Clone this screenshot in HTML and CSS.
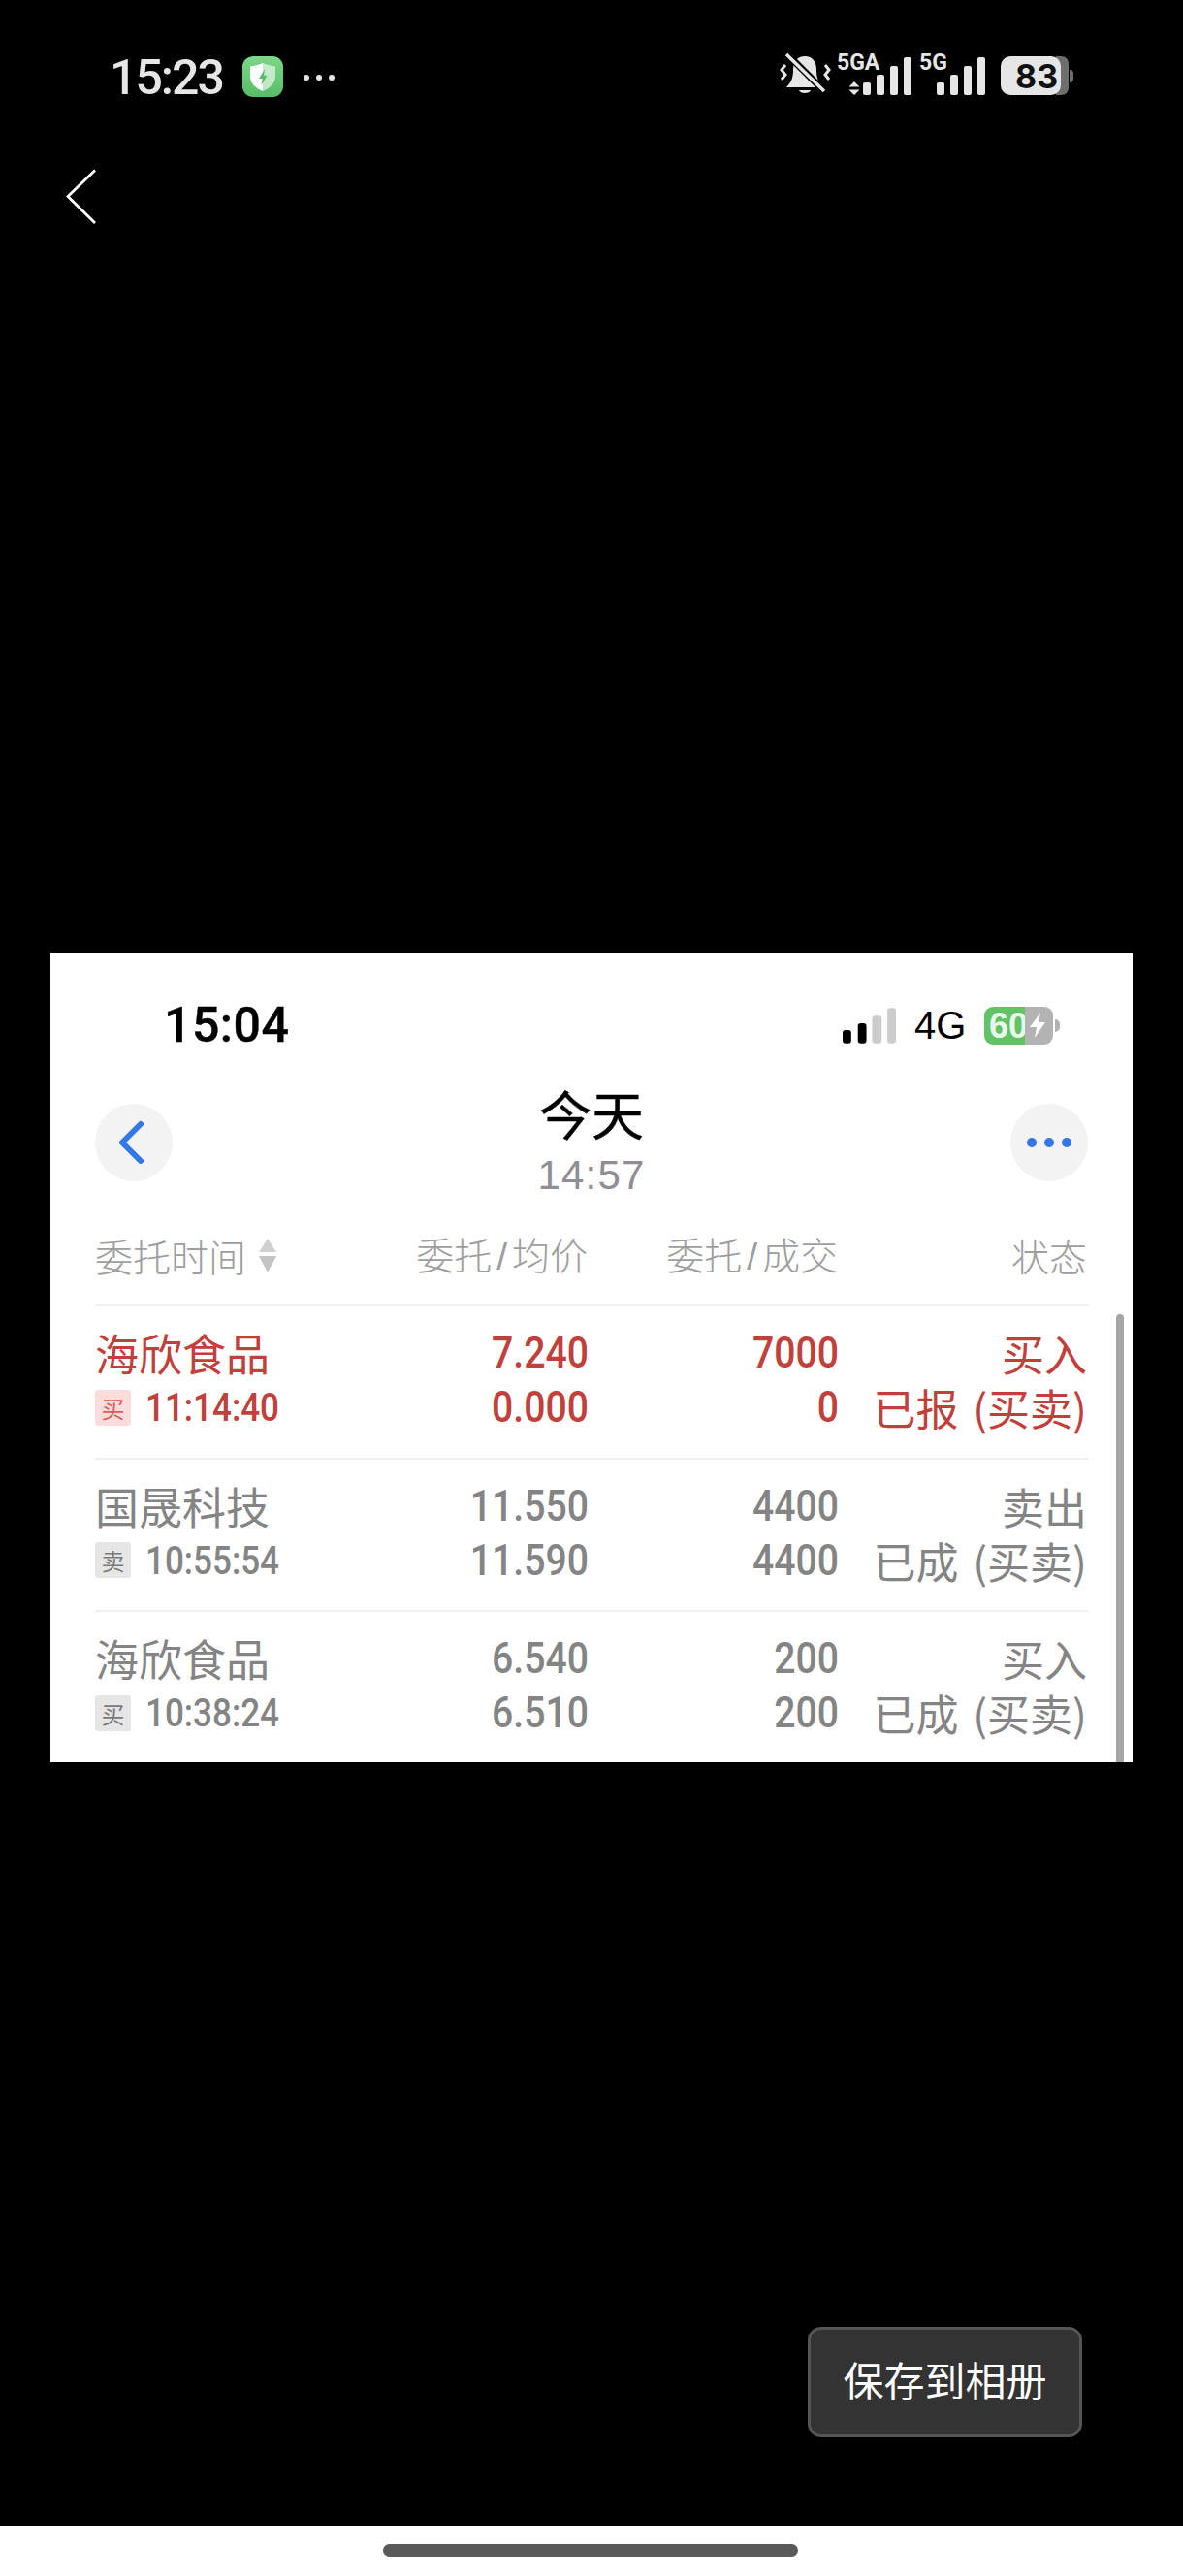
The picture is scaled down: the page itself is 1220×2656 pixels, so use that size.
FILE: index.html
```html
<!DOCTYPE html>
<html lang="zh-CN">
<head>
<meta charset="utf-8">
<title>保存到相册</title>
<link rel="stylesheet" href="styles.css">
</head>
<body>
<div class="screen">
  <header class="os-bar">
    <div class="os-left">
      <span class="os-time">15:23</span>
      <svg class="shield" viewBox="0 0 42 42" width="42" height="42">
        <defs><linearGradient id="sg" x1="0" y1="0" x2="0" y2="1"><stop offset="0" stop-color="#7bd88a"/><stop offset="1" stop-color="#58bd67"/></linearGradient></defs>
        <rect width="42" height="42" rx="11" fill="url(#sg)"/>
        <path d="M21 7 C17 9 12 10 8 10.500 V21 C8 28 14 33 21 36 Z" fill="#fff"/>
        <path d="M21 7 C25 9 30 10 34 10.500 V21 C34 28 28 33 21 36 Z" fill="#fff" opacity=".6"/>
        <path d="M23 13 L17 23 H20.500 L19.500 30 L25.500 19.800 H22 Z" fill="#58bd67"/>
      </svg>
      <span class="os-dots"><i></i><i></i><i></i></span>
    </div>
    <svg class="os-right" viewBox="805 45 304 60" width="304" height="60">
      <g fill="#e6e6e6">
        <path d="M831 58 C823 58 819 64 819 72 C819 80 817 85 812 90 H850 C845 85 843 80 843 72 C843 64 839 58 831 58 Z"/>
        <path d="M825 93 H837 C836 97 826 97 825 93 Z"/>
      </g>
      <path d="M812 55 L852 95" stroke="#000" stroke-width="7"/>
      <path d="M812 56 L851 94" stroke="#e6e6e6" stroke-width="3.500"/>
      <path d="M811 67 L807 72 L811 77 L807 82 M852 67 L856 72 L852 77 L856 82" fill="none" stroke="#e6e6e6" stroke-width="3"/>
      <text class="net" x="864" y="72">5GA</text>
      <text class="net" x="949" y="72">5G</text>
      <path d="M882 84 L887.500 89.500 H876.500 Z M882 98 L876.500 92.500 H887.500 Z" fill="#e6e6e6"/>
      <g fill="#e6e6e6">
        <rect x="891" y="85" width="8" height="13" rx="2"/><rect x="905" y="77" width="8" height="21" rx="2"/><rect x="919" y="68" width="8" height="30" rx="2"/><rect x="933" y="59" width="8" height="39" rx="2"/>
        <rect x="967" y="85" width="8" height="13" rx="2"/><rect x="981" y="77" width="8" height="21" rx="2"/><rect x="995" y="68" width="8" height="30" rx="2"/><rect x="1009" y="59" width="8" height="39" rx="2"/>
      </g>
      <path d="M1090 58 H1095 C1100 58 1103 61 1103 66 V90 C1103 95 1100 98 1095 98 H1090 Z M1104 72 H1105 C1107 72 1108 74 1108 75 V81 C1108 83 1107 85 1105 85 H1104 Z" fill="#6e6e6e"/>
      <rect x="1033" y="58" width="62" height="40" rx="10" fill="#e6e6e6"/>
      <text class="batt" x="1048" y="91">83</text>
    </svg>
  </header>

  <div class="back-row">
    <svg viewBox="0 0 32 58" width="32" height="58"><path d="M30 1.500 L2 28.500 L30 56" fill="none" stroke="#fff" stroke-width="2.800"/></svg>
  </div>

  <main class="card">
    <div class="ios-status">
      <span class="ios-time">15:04</span>
      <div class="ios-right">
        <svg viewBox="0 0 56 37" width="56" height="37" class="ios-signal">
          <rect x="0" y="23" width="9" height="14" rx="3" fill="#000"/>
          <rect x="16" y="16" width="9" height="21" rx="3" fill="#000"/>
          <rect x="31" y="8" width="10" height="29" rx="3" fill="#ccc"/>
          <rect x="47" y="0" width="9" height="37" rx="3" fill="#ccc"/>
        </svg>
        <span class="ios-net">4G</span>
        <div class="ios-batt">
          <span class="ios-batt-fill">60</span>
          <span class="ios-batt-rest"><svg viewBox="0 0 20 26" width="20" height="26"><path d="M13 0 L2 15 H9 L7 26 L18 10 H11 Z" fill="#fff"/></svg></span>
          <span class="ios-batt-tip"></span>
        </div>
      </div>
    </div>

    <nav class="nav">
      <button class="circle" type="button" aria-label="返回">
        <svg viewBox="0 0 30 48" width="30" height="48"><path d="M25 5 L6 24 L25 43" fill="none" stroke="#3478e5" stroke-width="6" stroke-linecap="round" stroke-linejoin="round"/></svg>
      </button>
      <div class="nav-title">
        <div class="title">今天</div>
        <div class="subtitle">14:57</div>
      </div>
      <button class="circle circle-right" type="button" aria-label="更多">
        <span class="more-dots"><i></i><i></i><i></i></span>
      </button>
    </nav>

    <div class="table">
      <div class="thead">
        <div class="col-name th-sort">委托时间
          <svg viewBox="0 0 20 35" width="20" height="35"><path d="M10 0 L19 14 H1 Z" fill="#d0d0d0"/><path d="M10 35 L19 18 H1 Z" fill="#c4c4c4"/></svg>
        </div>
        <div class="col-price">委托<span class="sl">/</span>均价</div>
        <div class="col-qty">委托<span class="sl">/</span>成交</div>
        <div class="col-state">状态</div>
      </div>

      <div class="row row-red">
        <div class="col-name">
          <div class="name">海欣食品</div>
          <div class="when"><span class="tag">买</span><span class="num">11:14:40</span></div>
        </div>
        <div class="col-price"><div class="num line">7.240</div><div class="num line">0.000</div></div>
        <div class="col-qty"><div class="num line">7000</div><div class="num line">0</div></div>
        <div class="col-state"><div class="line">买入</div><div class="line">已报 (买卖)</div></div>
      </div>

      <div class="row">
        <div class="col-name">
          <div class="name">国晟科技</div>
          <div class="when"><span class="tag">卖</span><span class="num">10:55:54</span></div>
        </div>
        <div class="col-price"><div class="num line">11.550</div><div class="num line">11.590</div></div>
        <div class="col-qty"><div class="num line">4400</div><div class="num line">4400</div></div>
        <div class="col-state"><div class="line">卖出</div><div class="line">已成 (买卖)</div></div>
      </div>

      <div class="row">
        <div class="col-name">
          <div class="name">海欣食品</div>
          <div class="when"><span class="tag">买</span><span class="num">10:38:24</span></div>
        </div>
        <div class="col-price"><div class="num line">6.540</div><div class="num line">6.510</div></div>
        <div class="col-qty"><div class="num line">200</div><div class="num line">200</div></div>
        <div class="col-state"><div class="line">买入</div><div class="line">已成 (买卖)</div></div>
      </div>
    </div>
    <div class="scrollbar"></div>
  </main>

  <div class="save-row">
    <button class="save" type="button">保存到相册</button>
  </div>
  <footer class="home-bar"><div class="home-pill"></div></footer>
</div>
</body>
</html>
```

FILE: styles.css
```css
* { box-sizing: border-box; }
html, body { margin: 0; padding: 0; background: #000; }
body { font-family: "Noto Sans CJK SC", "Liberation Sans", sans-serif; }
.screen { width: 1220px; height: 2656px; display: flex; flex-direction: column; background: #000; overflow: hidden; }

.os-bar { display: flex; justify-content: space-between; align-items: flex-end; height: 60px; margin-top: 45px; padding: 0 112px 0 113px; flex: none; }
.os-left { display: flex; align-items: center; height: 50px; }
.os-time { font: 500 50px/50px Roboto, "Liberation Sans", sans-serif; color: #e6e6e6; letter-spacing: -2px; width: 137px; }
.shield { display: block; margin-top: -2px; }
.os-dots { display: flex; gap: 7px; margin-left: 21px; }
.os-dots i { width: 6px; height: 6px; border-radius: 50%; background: #e6e6e6; }
.os-right { display: block; }
.net { font: 700 23px Roboto, "Liberation Sans", sans-serif; fill: #e6e6e6; }
.batt { font: 700 34px Inter, "Liberation Sans", sans-serif; fill: #111; }

.back-row { flex: none; margin-top: 69px; padding-left: 68px; height: 58px; }
.back-row svg { display: block; }

.card { position: relative; flex: none; margin: 751px 52px 0; width: 1116px; height: 834px; background: #fff; overflow: hidden; }

.ios-status { display: flex; justify-content: space-between; height: 130px; padding: 50px 75px 0 117px; }
.ios-time { font: 500 50px/48px Roboto, "Liberation Sans", sans-serif; color: #000; letter-spacing: .5px; -webkit-text-stroke: .4px #000; }
.ios-right { display: flex; align-items: center; height: 48px; }
.ios-signal { display: block; margin-left: 1px; width: 55px; }
.ios-net { font: 400 40px/48px "Liberation Sans", sans-serif; color: #000; margin-left: 19px; width: 72px; }
.ios-batt { position: relative; display: flex; width: 71px; height: 39px; margin-right: 7px; }
.ios-batt-fill { width: 42px; height: 39px; background: #63c266; border-radius: 9px 0 0 9px; color: #e8f7ea; font: 700 36px/39px "Liberation Sans", sans-serif; padding-left: 5px; white-space: nowrap; }
.ios-batt-rest { width: 29px; height: 39px; background: #b3b3b3; border-radius: 0 9px 9px 0; padding: 6px 0 0 3px; }
.ios-batt-rest svg { display: block; }
.ios-batt-tip { position: absolute; right: -7px; top: 13px; width: 5px; height: 13px; background: #b3b3b3; border-radius: 0 5px 5px 0; }

.nav { display: grid; grid-template-columns: 80px 1fr 80px; padding: 6px 46px 8px; height: 130px; }
.circle { width: 80px; height: 80px; margin-top: 19px; border: 0; padding: 0 6px 0 0; border-radius: 50%; background: #f3f3f4; display: flex; align-items: center; justify-content: center; }
.circle-right { padding: 0; }
.circle svg { display: block; }
.more-dots { display: flex; gap: 8px; }
.more-dots i { width: 10px; height: 10px; border-radius: 50%; background: #3478e5; }
.nav-title { text-align: center; }
.title { font: 400 54px/62px "Noto Sans CJK SC", sans-serif; color: #000; -webkit-text-stroke: .4px #000; margin-top: -2px; }
.subtitle { font: 400 42px/46px "Liberation Sans", sans-serif; color: #8e8e93; margin-top: 10px; letter-spacing: 1.200px; }

.table { padding: 0 46px; }
.thead, .row { display: grid; grid-template-columns: 279px 230px 258px 256px; }
.thead { height: 102px; align-items: center; color: #9e9e9e; font-size: 39px; font-weight: 300; line-height: 50px; }
.thead .col-name { display: flex; align-items: center; gap: 12px; }
.thead svg { display: block; }
.thead .col-price, .thead .col-qty { padding-right: 1px; }
.sl { font-family: "Liberation Sans", sans-serif; margin: 0 5px; }
.col-price, .col-qty, .col-state { text-align: right; white-space: nowrap; }

.row { height: 157.500px; border-top: 2px solid #f0f0f0; padding-top: 20px; color: #848484; }
.row-red { color: #c0403c; }
.line { height: 56px; line-height: 56px; white-space: nowrap; }
.col-state { font-size: 44px; font-weight: 400; word-spacing: 5px; }
.thead .col-state { font-size: 39px; font-weight: 300; }
.name { height: 56px; font-size: 45px; line-height: 56px; font-weight: 400; }
.when { height: 56px; display: flex; align-items: center; }
.tag { width: 37px; height: 37px; margin-right: 15px; border-radius: 3px; background: #e6e6e6; color: #7a7a7a; font-size: 24px; line-height: 37px; text-align: center; font-weight: 400; }
.row-red .tag { background: #fadcdc; color: #d8605c; }
.num { font-family: Roboto, "Liberation Sans", sans-serif; font-size: 45px; font-weight: 500; transform: scaleX(.87); transform-origin: right center; }
.when .num { font-size: 41px; line-height: 56px; transform: scaleX(.855); transform-origin: left center; white-space: nowrap; }

.scrollbar { position: absolute; left: 1099px; top: 372px; width: 8px; height: 470px; background: #a6a6a6; border-radius: 4px 4px 0 0; }

.save-row { flex: 1; display: flex; justify-content: flex-end; align-items: flex-end; padding: 0 104px 91px 0; }
.save { width: 283px; height: 114px; background: #333; border: 3px solid #555; border-radius: 14px; color: #fff; font: 400 42px/1 "Noto Sans CJK SC", sans-serif; padding: 0 0 6px; }

.home-bar { flex: none; height: 52px; background: #fff; padding-top: 19px; }
.home-pill { width: 428px; height: 13px; margin-left: 395px; background: #5a5a5a; border-radius: 7px; }
```
